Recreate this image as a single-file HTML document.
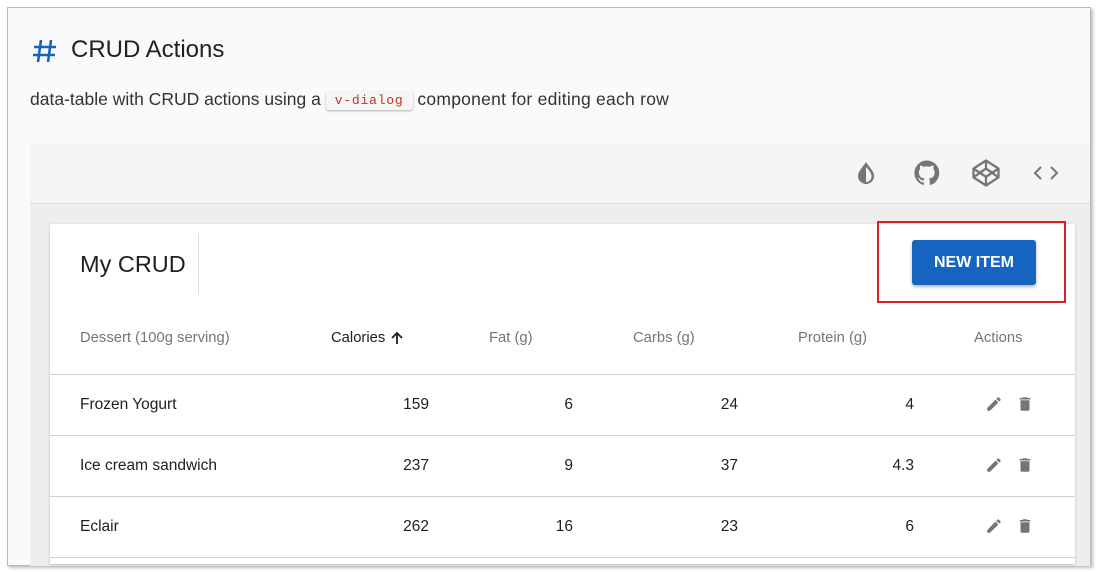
<!DOCTYPE html>
<html><head><meta charset="utf-8"><style>
*{box-sizing:border-box;margin:0;padding:0}
body{width:1102px;height:572px;background:#fff;font-family:"Liberation Sans",Arial,sans-serif;position:relative;overflow:hidden}
.frame{position:absolute;left:7px;top:7px;width:1084px;height:559px;border:1px solid #b8b8b8;background:#fafafa;box-shadow:2px 2px 3px rgba(0,0,0,.25);overflow:hidden}
.a{position:absolute;white-space:nowrap}
.th{font-size:14.8px;color:#757575;top:330px}
.td{font-size:15.5px;color:#212121}
.r{text-align:right}
.hl{position:absolute;left:50px;width:1025px;height:1px;background:#d0d0d0}
</style></head><body>
<div class="frame"></div>
<svg class="a" style="left:32px;top:39px" width="26" height="24" viewBox="0 0 26 24" fill="none" stroke="#1565c0" stroke-width="2.6"><path d="M9 1L6 23M19 1L16 23M2 8h22M1 16h22"/></svg>
<div class="a" style="left:71px;top:36px;font-size:24px;color:#212121">CRUD Actions</div>
<div class="a" style="left:30px;top:89px;font-size:17.5px;color:#333">data-table with CRUD actions using a <span style="display:inline-block;font-family:'Liberation Mono',monospace;font-size:13px;letter-spacing:0.8px;color:#c0341d;background:#f5f5f5;padding:2px 9px;border-radius:3px;box-shadow:0 1px 2px rgba(0,0,0,.3);vertical-align:1px">v-dialog</span> <span style="letter-spacing:0.25px">component for editing each row</span></div>
<div class="a" style="left:30px;top:143px;width:1060px;height:61px;background:#f5f5f5;border-bottom:1px solid #ddd"></div>
<div class="a" style="left:30px;top:204px;width:1060px;height:362px;background:#eeeeee"></div>
<svg class="a" style="left:856px;top:161px" width="20" height="24" viewBox="0 0 20 24"><path fill="#757575" d="M10 1C7 6 2 10 2 15a8 8 0 0 0 16 0c0-5-5-9-8-14z"/><path fill="#f5f5f5" d="M10 6v15a5.5 5.5 0 0 0 5.5-6c0-3-2.5-6-5.5-9z"/></svg>
<svg class="a" style="left:912px;top:158px" width="30" height="30" viewBox="0 0 24 24"><path fill="#757575" d="M12 2A10 10 0 0 0 8.8 21.5c.5.1.7-.2.7-.5v-1.7c-2.8.6-3.4-1.3-3.4-1.3-.5-1.2-1.1-1.5-1.1-1.5-.9-.6.1-.6.1-.6 1 .1 1.5 1 1.5 1 .9 1.5 2.3 1.1 2.9.8.1-.6.3-1.1.6-1.3-2.2-.3-4.6-1.1-4.6-5 0-1.1.4-2 1-2.7-.1-.3-.4-1.3.1-2.7 0 0 .8-.3 2.7 1a9.4 9.4 0 0 1 5 0c1.9-1.3 2.7-1 2.7-1 .5 1.4.2 2.4.1 2.7.6.7 1 1.6 1 2.7 0 3.9-2.3 4.7-4.6 5 .4.3.7.9.7 1.9V21c0 .3.2.6.7.5A10 10 0 0 0 12 2z"/></svg>
<svg class="a" style="left:970px;top:158px" width="32" height="30" viewBox="0 0 24 24" fill="none" stroke="#757575" stroke-width="1.8" stroke-linejoin="round"><path d="M12 2l10 6.5v7L12 22 2 15.5v-7z M2 8.5L12 15l10-6.5 M12 2v6.5L5.5 12.7 M12 8.5l6.5 4.2 M12 22v-7 M2 15.5l10-7 10 7"/></svg>
<svg class="a" style="left:1033px;top:162px" width="26" height="22" viewBox="0 0 26 22" fill="none" stroke="#757575" stroke-width="2"><path d="M8 5l-6 6 6 6M18 5l6 6-6 6"/></svg>
<div class="a" style="left:50px;top:224px;width:1025px;height:340px;background:#fff;box-shadow:0 1px 3px rgba(0,0,0,.2)"></div>
<div class="a" style="left:80px;top:251px;font-size:23.5px;color:#212121">My CRUD</div>
<div class="a" style="left:198px;top:234px;width:1px;height:60px;background:#ddd"></div>
<div class="a" style="left:877px;top:221px;width:189px;height:82px;border:2px solid #e02020"></div>
<div class="a" style="left:912px;top:240px;width:124px;height:45px;background:#1565c0;border-radius:3px;box-shadow:0 2px 3px rgba(0,0,0,.3);color:#fff;font-weight:bold;font-size:16px;text-align:center;line-height:45px">NEW ITEM</div>
<div class="a th" style="left:80px">Dessert (100g serving)</div>
<div class="a th" style="left:331px;color:#212121">Calories</div>
<svg class="a" style="left:390px;top:331px" width="14" height="14" viewBox="0 0 14 14" fill="none" stroke="#212121" stroke-width="1.8"><path d="M7 13V2M2 7l5-5 5 5"/></svg>
<div class="a th" style="left:489px">Fat (g)</div>
<div class="a th" style="left:633px">Carbs (g)</div>
<div class="a th" style="left:798px">Protein (g)</div>
<div class="a th" style="left:974px">Actions</div>
<div class="hl" style="top:374px"></div><div class="hl" style="top:435px"></div><div class="hl" style="top:496px"></div><div class="hl" style="top:557px"></div>
<div id="rows"></div>
<script>
var d=[["Frozen Yogurt","159","6","24","4"],["Ice cream sandwich","237","9","37","4.3"],["Eclair","262","16","23","6"]];
var h="",R=[429,573,738,914];
d.forEach(function(r,i){var y=396+i*61;
h+='<div class="a td" style="left:80px;top:'+y+'px">'+r[0]+'</div>';
for(var j=1;j<5;j++)h+='<div class="a td r" style="left:'+(R[j-1]-100)+'px;width:100px;top:'+y+'px">'+r[j]+'</div>';
h+='<svg class="a" style="left:985px;top:'+(y-1)+'px" width="18" height="18" viewBox="0 0 24 24"><path fill="#757575" d="M3 17.25V21h3.75L17.8 9.94l-3.75-3.75L3 17.25zM20.7 7.04a1 1 0 0 0 0-1.41l-2.34-2.34a1 1 0 0 0-1.41 0l-1.83 1.83 3.75 3.75 1.83-1.83z"/></svg>';
h+='<svg class="a" style="left:1016px;top:'+(y-1)+'px" width="18" height="18" viewBox="0 0 24 24"><path fill="#757575" d="M6 19a2 2 0 0 0 2 2h8a2 2 0 0 0 2-2V7H6v12zM19 4h-3.5l-1-1h-5l-1 1H5v2h14V4z"/></svg>';});
document.getElementById("rows").innerHTML=h;
</script>
</body></html>
